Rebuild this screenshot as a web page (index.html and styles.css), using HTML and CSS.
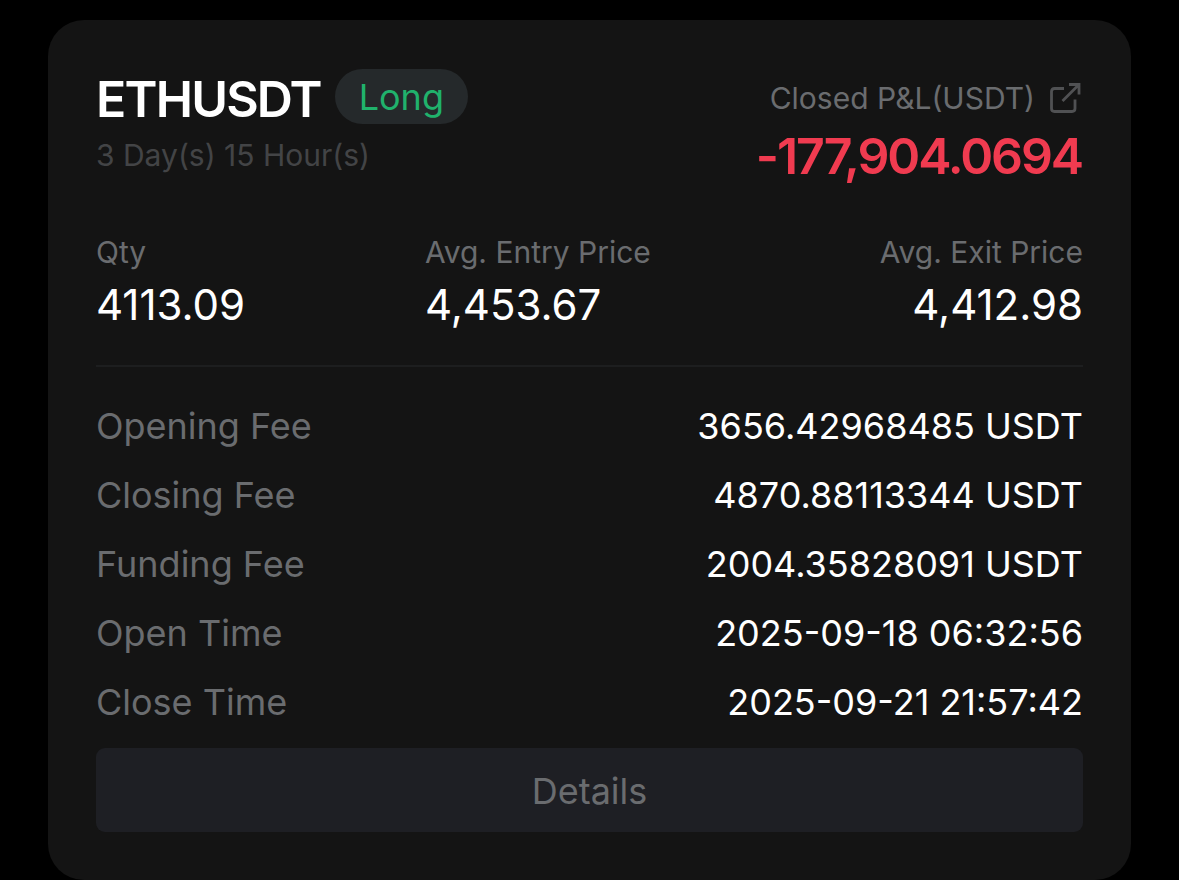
FILE: index.html
```html
<!DOCTYPE html>
<html lang="en">
<head>
    <meta charset="UTF-8">
    <meta name="viewport" content="width=device-width, initial-scale=1.0">
    <title>Closed P&amp;L</title>
    <link rel="stylesheet" href="styles.css">
</head>
<body>
    <section class="card">
        <header class="top">
            <div>
                <div class="pair">
                    <h1>ETHUSDT</h1>
                    <span class="side">Long</span>
                </div>
                <p class="duration">3 Day(s) 15 Hour(s)</p>
            </div>
            <div class="pnl">
                <p class="pnl-label">
                    <span class="pnl-text">Closed P&amp;L(USDT)</span>
                    <svg class="share" viewBox="0 0 32 32" width="32" height="32">
                        <path d="M15 6.500H5.500Q2.500 6.500 2.500 9.500V26.500Q2.500 29.500 5.500 29.500H23Q26 29.500 26 26.500V17.500"/>
                        <path d="M20 2.500H30V12.500M30 2.500L13.500 19"/>
                    </svg>
                </p>
                <p class="pnl-value">-177,904.0694</p>
            </div>
        </header>

        <div class="stats">
            <div class="stat qty">
                <p class="stat-label">Qty</p>
                <p class="stat-value">4113.09</p>
            </div>
            <div class="stat entry">
                <p class="stat-label">Avg. Entry Price</p>
                <p class="stat-value">4,453.67</p>
            </div>
            <div class="stat exit">
                <p class="stat-label">Avg. Exit Price</p>
                <p class="stat-value">4,412.98</p>
            </div>
        </div>

        <dl class="rows">
            <div class="row"><dt>Opening Fee</dt><dd>3656.42968485 USDT</dd></div>
            <div class="row"><dt>Closing Fee</dt><dd>4870.88113344 USDT</dd></div>
            <div class="row"><dt>Funding Fee</dt><dd>2004.35828091 USDT</dd></div>
            <div class="row"><dt>Open Time</dt><dd>2025-09-18 06:32:56</dd></div>
            <div class="row"><dt>Close Time</dt><dd>2025-09-21 21:57:42</dd></div>
        </dl>

        <button class="details">Details</button>
    </section>
</body>
</html>
```

FILE: styles.css
```css
*{
    margin: 0;
    padding: 0;
    box-sizing: border-box;
}
body{
    background: #000;
    color: #fff;
    font-family: Inter, "Liberation Sans", sans-serif;
    padding: 20px 48px 0;
    height: 880px;
    overflow: hidden;
}
.card{
    height: 860px;
    padding: 48px 48px 0;
    border-radius: 36px;
    background: #141414;
}
.top{
    display: flex;
    justify-content: space-between;
    height: 164px;
}
.pair{
    display: flex;
    align-items: center;
    gap: 14px;
    height: 62px;
}
h1{
    font-size: 50px;
    font-weight: 600;
    letter-spacing: -1.8px;
    line-height: 62px;
}
.side{
    width: 133px;
    height: 55px;
    margin-top: -5px;
    border-radius: 28px;
    background: #25292b;
    color: #20b26c;
    font-size: 36px;
    line-height: 57px;
    text-align: center;
}
.duration{
    margin-top: 5px;
    color: #434446;
    font-size: 30px;
    line-height: 40px;
}
.pnl{
    text-align: right;
}
.pnl-label{
    display: flex;
    justify-content: flex-end;
    align-items: center;
    gap: 14px;
    height: 60px;
    padding-right: 2px;
    color: #6a6c6f;
    font-size: 30px;
}
.share{
    fill: none;
    stroke: #505153;
    stroke-width: 2.8;
}
.pnl-value{
    padding-right: 1px;
    color: #f03b50;
    font-size: 50px;
    font-weight: 600;
    letter-spacing: -2.1px;
    line-height: 57px;
}
.stats{
    display: grid;
    grid-template-columns: 1fr 1fr 1fr;
    height: 135px;
    border-bottom: 2px solid #1d1e1f;
}
.stat-label{
    color: #6a6c6f;
    font-size: 30px;
    line-height: 40px;
}
.stat-value{
    margin-top: 6px;
    font-size: 42px;
    line-height: 54px;
}
.exit{
    text-align: right;
}
.rows{
    padding-top: 25px;
}
.row{
    display: flex;
    justify-content: space-between;
    height: 69px;
    font-size: 36px;
    line-height: 69px;
}
.row dt{
    color: #6a6c6f;
}
.details{
    display: block;
    width: 100%;
    height: 84px;
    margin-top: 11px;
    padding-top: 1px;
    border: none;
    border-radius: 9px;
    background: #1e1f24;
    color: #6a6c6f;
    font-family: inherit;
    font-size: 36px;
}
```
